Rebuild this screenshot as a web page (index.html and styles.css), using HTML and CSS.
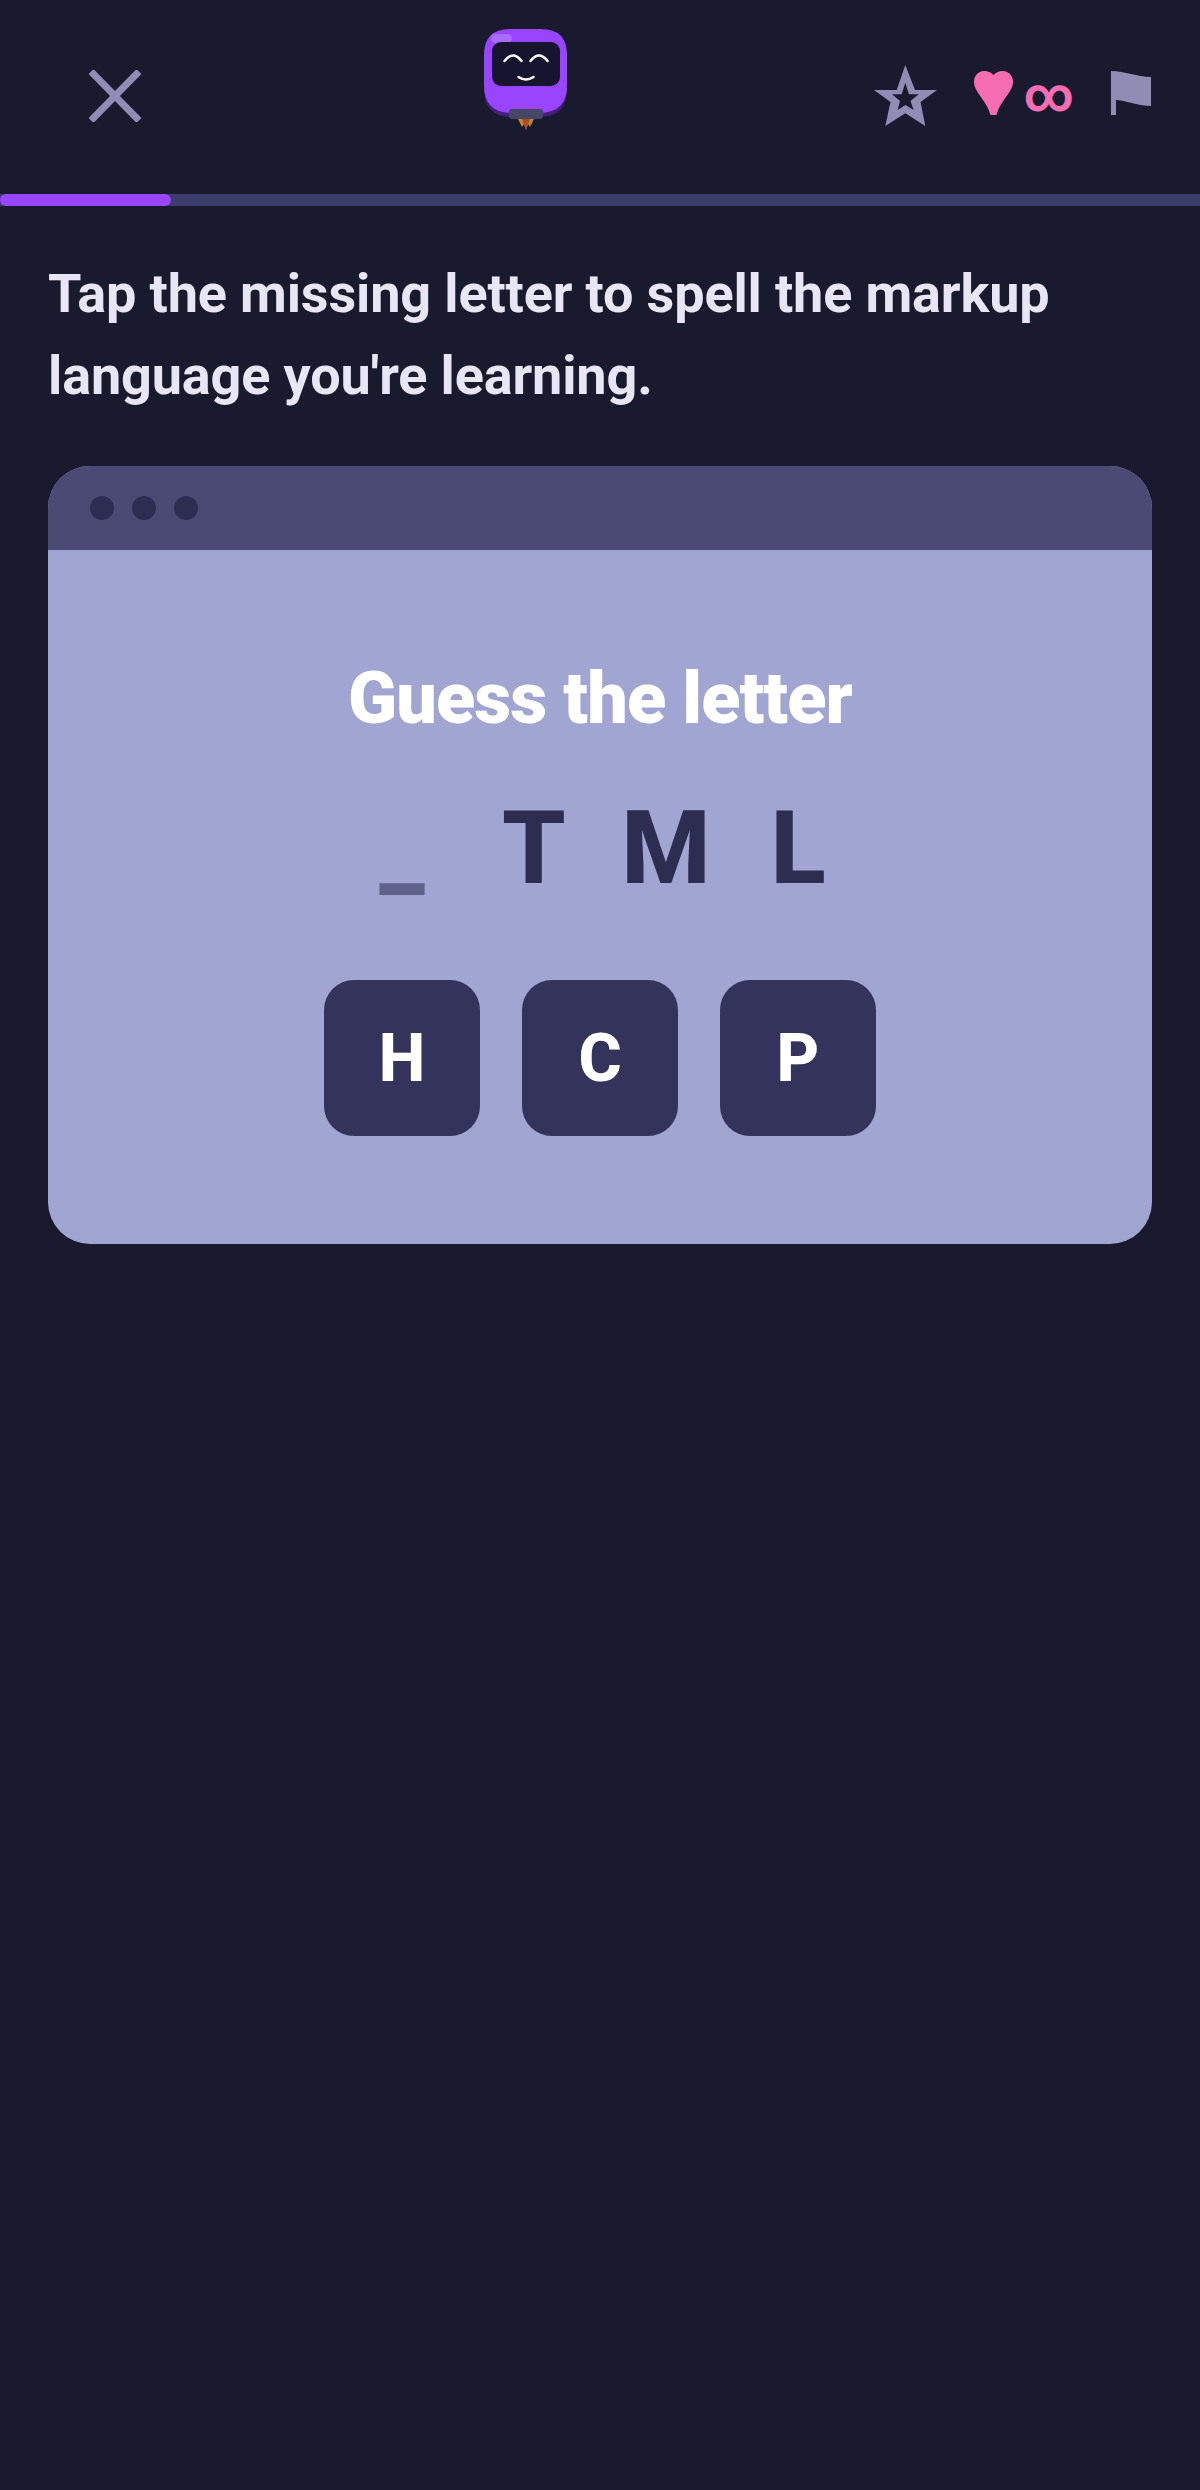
FILE: index.html
```html
<!DOCTYPE html>
<html lang="en">
<head>
    <meta charset="UTF-8">
    <meta name="viewport" content="width=device-width, initial-scale=1.0">
    <title>Lesson</title>
    <link rel="stylesheet" href="styles.css">
</head>
<body>
    <header class="topbar">
        <button class="close-btn" aria-label="Close">
            <svg width="52" height="52" viewBox="0 0 52 52"><path d="M2 1.500 L50 50.500 M50 1.500 L2 50.500" stroke="#8f8db5" stroke-width="7" fill="none"/></svg>
        </button>

        <!-- Mascot -->
        <svg class="mascot" width="84" height="102" viewBox="0 0 84 102">
            <path d="M0 40 V60 Q0 88 28 88 H55 Q83 88 83 60 V40 Z" fill="#44207a"/>
            <path d="M26 0 H57 Q83 0 83 26 V56 Q83 84 55 84 H28 Q0 84 0 56 V26 Q0 0 26 0 Z" fill="#9945ff"/>
            <rect x="7" y="5" width="21" height="9" rx="4.500" fill="#ab6bff"/>
            <rect x="8" y="13" width="68" height="44" rx="9" fill="#16142e"/>
            <path d="M20.500 32 Q29 21 37.500 32 M46.500 32 Q55 21 63.500 32" stroke="#fff" stroke-width="2.500" fill="none" stroke-linecap="round"/>
            <path d="M34.500 48 Q42 53 49.500 48" stroke="#fff" stroke-width="2.500" fill="none" stroke-linecap="round"/>
            <path d="M34 90 H50 L46 98 L44 95 L42 101 L40 95 L38 98 Z" fill="#b98a32"/>
            <path d="M38 90 H46 L42 101 Z" fill="#b4482b"/>
            <rect x="25" y="80" width="34" height="10" rx="3" fill="#454766"/>
        </svg>

        <div class="status">
            <svg class="star" width="63" height="61" viewBox="0 0 63 61"><path fill-rule="evenodd" fill="#8f8db5" d="M31.300 0 L41 25 H63 L46.500 37 L51.300 61 L31.300 48.300 L11.300 61 L16.500 37 L0 25 H22.700 Z M31.300 17.700 L27.700 29.300 H18 L26 36 L23.700 45 L31.300 40 L39.700 45 L36.500 36 L44.700 29.300 H35 Z"/></svg>
            <div class="lives">
                <svg class="heart" width="39" height="44" viewBox="0 0 39 44"><path d="M19.500 4 C17 1.500 14 0 10 0 C4 0 0 5 0 11 C0 21 13 30 16.500 44 H22.500 C26 30 39 21 39 11 C39 5 35 0 29 0 C25 0 22 1.500 19.500 4 Z" fill="#f76db3"/></svg>
                <span class="lives-count">∞</span>
            </div>
            <svg class="flag" width="40" height="44" viewBox="0 0 40 44"><path d="M0 0 C14 0 26 6 40 6 V35 C26 35 14 29 5 29 V44 H0 Z" fill="#8f8db5"/></svg>
        </div>
    </header>

    <div class="progress"><div class="progress-fill" style="width: 171px"></div></div>

    <main class="content">
        <h2 class="prompt">Tap the missing letter to spell the markup language you're learning.</h2>

        <section class="window">
            <div class="window-bar">
                <span class="dot"></span>
                <span class="dot"></span>
                <span class="dot"></span>
            </div>
            <div class="window-body">
                <h3 class="game-title">Guess the letter</h3>
                <div class="word">
                    <span class="blank">_</span>
                    <span>T</span>
                    <span>M</span>
                    <span>L</span>
                </div>
                <div class="choices">
                    <button class="choice">H</button>
                    <button class="choice">C</button>
                    <button class="choice">P</button>
                </div>
            </div>
        </section>
    </main>
</body>
</html>
```

FILE: styles.css
```css
body {
    margin: 0;
    font-family: Roboto, Arial, sans-serif;
    background-color: #1a1a2e;
    color: #e8e6f5;
}

.topbar {
    height: 194px;
    display: flex;
    align-items: flex-start;
    box-sizing: border-box;
    padding: 0 49px 0 89px;
}

.close-btn {
    background: none;
    border: none;
    padding: 0;
    margin-top: 70px;
    width: 52px;
    height: 52px;
}

.close-btn svg {
    display: block;
}

.mascot {
    margin-top: 29px;
    margin-left: 343px;
}

.status {
    display: flex;
    align-items: flex-start;
    margin-top: 65px;
    margin-left: auto;
}

.star {
    margin-right: 37px;
}

.lives {
    display: flex;
    align-items: flex-start;
    margin-top: 6px;
    margin-right: 37px;
}

.heart {
    flex-shrink: 0;
}

.lives-count {
    font-size: 48px;
    line-height: 48px;
    font-weight: 700;
    color: #f76db3;
    margin-left: 11px;
}

.flag {
    margin-top: 6px;
}

.progress {
    height: 12px;
    background-color: #3d3d6b;
}

.progress-fill {
    height: 100%;
    background-color: #9945ff;
    border-radius: 6px;
}

.content {
    padding: 0 48px;
}

.prompt {
    margin: 47px 0 49px;
    font-size: 54px;
    line-height: 82px;
    font-weight: 700;
    letter-spacing: -0.15px;
    color: #e8e6f5;
}

.window {
    border-radius: 42px;
    overflow: hidden;
    background-color: #a1a5d2;
}

.window-bar {
    height: 84px;
    background-color: #4a4a75;
    display: flex;
    align-items: center;
    gap: 18px;
    padding-left: 42px;
}

.dot {
    width: 24px;
    height: 24px;
    border-radius: 50%;
    background-color: #2d2d52;
}

.window-body {
    height: 694px;
    box-sizing: border-box;
    padding-top: 107px;
}

.game-title {
    margin: 0;
    text-align: center;
    font-size: 72px;
    line-height: 84px;
    font-weight: 900;
    letter-spacing: -0.9px;
    color: #fff;
}

.word {
    display: grid;
    grid-template-columns: repeat(4, 90px);
    justify-content: center;
    justify-items: center;
    gap: 42px;
    margin-top: 52px;
    font-size: 102px;
    line-height: 110px;
    font-weight: 800;
    color: #2d2d52;
}

.blank {
    color: #5f628b;
}

.choices {
    display: flex;
    justify-content: center;
    gap: 42px;
    margin-top: 77px;
}

.choice {
    width: 156px;
    height: 156px;
    border: none;
    border-radius: 30px;
    background-color: #33335c;
    color: #fff;
    font-family: Roboto, Arial, sans-serif;
    font-size: 66px;
    font-weight: 800;
}
```
